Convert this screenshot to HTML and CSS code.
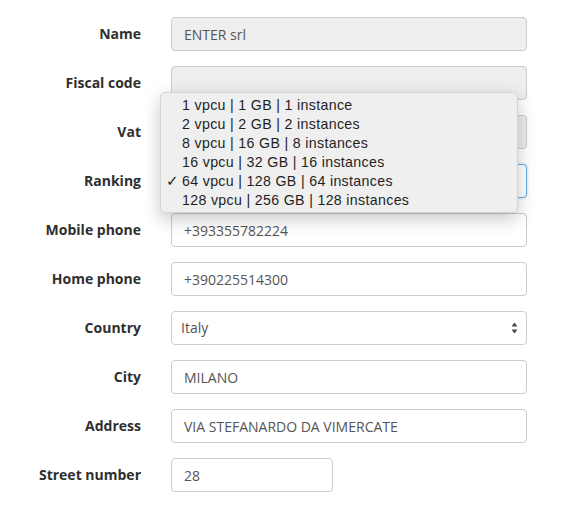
FILE: index.html
```html
<!DOCTYPE html>
<html>
<head>
<meta charset="utf-8">
<link rel="stylesheet" href="styles.css">
</head>
<body>
<form class="form">
  <div class="row"><label class="lbl">Name</label><input class="ctl disabled" value="ENTER srl" disabled></div>
  <div class="row"><label class="lbl">Fiscal code</label><input class="ctl disabled" value="" disabled></div>
  <div class="row"><label class="lbl">Vat</label><input class="ctl disabled" value="" disabled></div>
  <div class="row"><label class="lbl">Ranking</label><div class="ctl sel focus"><span class="seltext">64 vpcu | 128 GB | 64 instances</span><span class="arrows"><svg width="7" height="12" viewBox="0 0 7 12"><path d="M3.5 0.5 L6.5 4.5 L0.5 4.5 Z M3.5 11.5 L6.5 7.5 L0.5 7.5 Z" fill="#4a4a4a"/></svg></span></div></div>
  <div class="row"><label class="lbl">Mobile phone</label><input class="ctl" value="+393355782224"></div>
  <div class="row"><label class="lbl">Home phone</label><input class="ctl" value="+390225514300"></div>
  <div class="row"><label class="lbl">Country</label><div class="ctl sel"><span class="seltext">Italy</span><span class="arrows"><svg width="7" height="12" viewBox="0 0 7 12"><path d="M3.5 0.5 L6.5 4.5 L0.5 4.5 Z M3.5 11.5 L6.5 7.5 L0.5 7.5 Z" fill="#4a4a4a"/></svg></span></div></div>
  <div class="row"><label class="lbl">City</label><input class="ctl" value="MILANO"></div>
  <div class="row"><label class="lbl">Address</label><input class="ctl" value="VIA STEFANARDO DA VIMERCATE"></div>
  <div class="row"><label class="lbl">Street number</label><input class="ctl short" value="28"></div>

  <ul class="menu">
    <li class="item">1 vpcu | 1 GB | 1 instance</li>
    <li class="item">2 vpcu | 2 GB | 2 instances</li>
    <li class="item">8 vpcu | 16 GB | 8 instances</li>
    <li class="item">16 vpcu | 32 GB | 16 instances</li>
    <li class="item checked"><span class="check">✓</span>64 vpcu | 128 GB | 64 instances</li>
    <li class="item">128 vpcu | 256 GB | 128 instances</li>
  </ul>
</form>
</body>
</html>
```
FILE: styles.css
```css
* { box-sizing: border-box; }
html, body { margin: 0; padding: 0; background: #fff; }
body { width: 572px; height: 507px; overflow: hidden; font-family: "Open Sans", sans-serif; }

.form {
  position: relative;
  display: flex;
  flex-direction: column;
  gap: 15px;
  padding-top: 17px;
  margin: 0;
}

.row {
  display: grid;
  grid-template-columns: 141px 356px;
  column-gap: 30px;
  align-items: center;
}

.lbl {
  text-align: right;
  font-weight: 700;
  font-size: 14px;
  line-height: 20px;
  color: #2f2f2f;
}

.ctl {
  display: block;
  width: 356px;
  height: 34px;
  padding: 6px 12px;
  font-family: "Open Sans", sans-serif;
  font-size: 14px;
  line-height: 20px;
  color: #555;
  background: #fff;
  border: 1px solid #ccc;
  border-radius: 4px;
  margin: 0;
  outline: none;
}

.ctl.disabled {
  background: #eee;
  -webkit-text-fill-color: #555;
  opacity: 1;
}

.ctl.short { width: 162px; }

.sel {
  display: flex;
  align-items: center;
  justify-content: space-between;
  padding: 0 8px 0 9px;
}

.sel .seltext { white-space: nowrap; }

.arrows { display: flex; align-items: center; }

.focus {
  border-color: #66afe9;
  box-shadow: 0 0 3px rgba(102, 175, 233, 0.5);
}

.menu {
  position: absolute;
  left: 160px;
  top: 92px;
  width: 358px;
  height: 121px;
  margin: 0;
  padding: 3px 0 0 0;
  list-style: none;
  background: #efefef;
  border: 1px solid #d4d4d4;
  border-radius: 5px;
  box-shadow: 0 6px 18px rgba(0, 0, 0, 0.22);
  font-family: "Liberation Sans", Arial, sans-serif;
  font-size: 14.2px;
  color: #1f1f1f;
}

.item {
  position: relative;
  height: 19px;
  line-height: 19px;
  padding-left: 21px;
  white-space: nowrap;
  letter-spacing: 0.33px;
}

.check {
  position: absolute;
  left: 5px;
  top: 0;
  font-family: "DejaVu Sans", sans-serif;
  font-size: 15px;
  font-weight: 700;
  letter-spacing: 0;
}
```
